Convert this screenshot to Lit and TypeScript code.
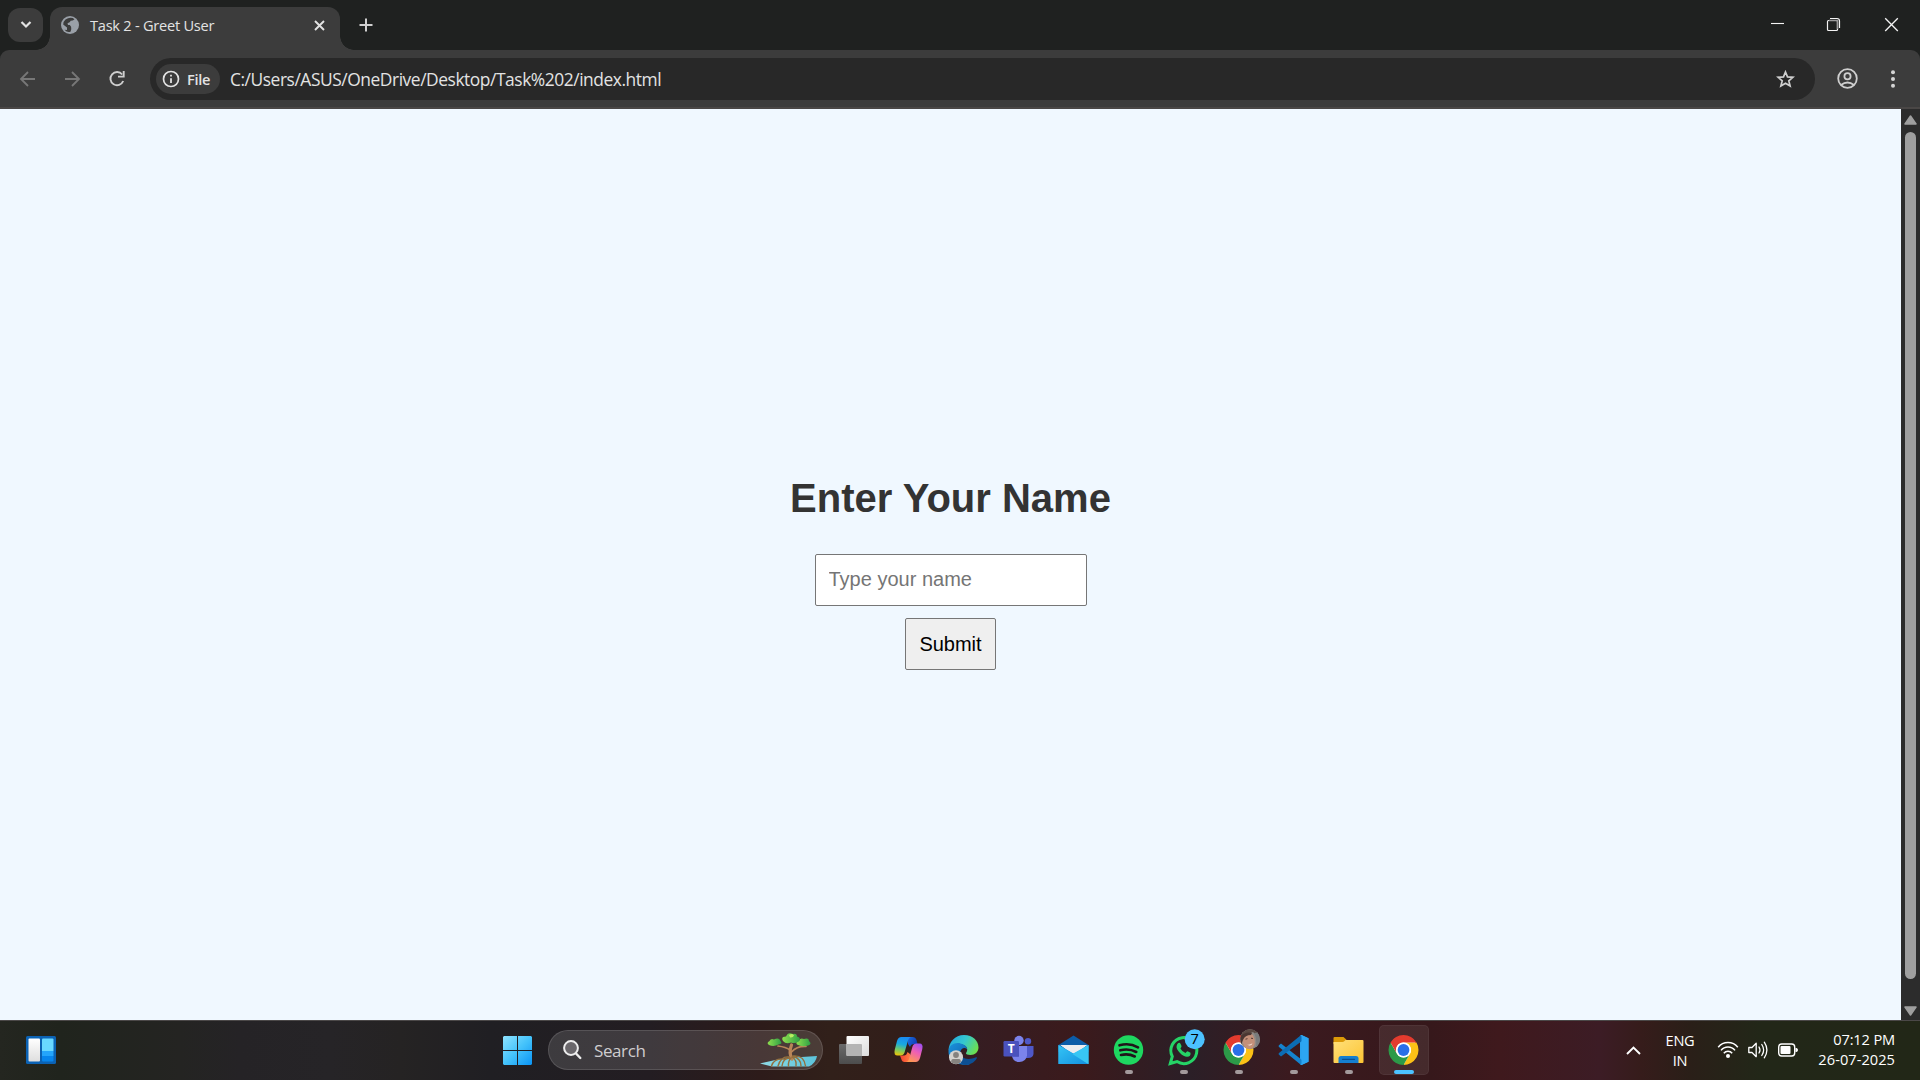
import { LitElement, html, svg, css } from "lit";
import { customElement } from "lit/decorators.js";

const chromeSector = "M0-7.5H12.99A15 15 0 0 0-12.99-7.5L-6.5 3.75A7.5 7.5 0 0 1 0-7.5Z";
const chromeMark = svg`
  <g transform="translate(27.5 30)">
    <circle r="14" fill="#fff" />
    <path d=${chromeSector} fill="#fbc116" transform="rotate(120)" />
    <path d=${chromeSector} fill="#2c9a48" transform="rotate(240)" />
    <path d=${chromeSector} fill="#e33b2e" />
    <circle r="7.5" fill="#fff" />
    <circle r="5.9" fill="#2a6fe8" />
  </g>`;

const icons = {
  windows: svg`
    <defs><linearGradient id="win" gradientUnits="userSpaceOnUse" x1="13" y1="16" x2="42" y2="45">
      <stop offset="0" stop-color="#8fe3ff" /><stop offset=".5" stop-color="#45c3fb" /><stop offset="1" stop-color="#0a94f5" />
    </linearGradient></defs>
    <path fill="url(#win)" d="M14 16H27V30H13V17ZM28 16H41L42 17V30H28ZM13 31H27V45H14L13 44ZM28 31H42V44L41 45H28Z" />`,
  taskView: svg`
    <defs>
      <linearGradient id="tv1" x2="1" y2="1"><stop offset="0" stop-color="#fff" /><stop offset="1" stop-color="#dcdcdc" /></linearGradient>
      <linearGradient id="tv2" x2="0" y2="1"><stop offset="0" stop-color="#6b6b6b" /><stop offset="1" stop-color="#4c4c4c" /></linearGradient>
    </defs>
    <rect x="13" y="24" width="23" height="20" rx="1" fill="url(#tv2)" />
    <rect x="20.500" y="16" width="22.500" height="20" rx="1" fill="url(#tv1)" />
    <path d="M20.500 24H35Q36 24 36 25V36H21.500Q20.500 36 20.500 35Z" fill="#b4b4b4" />`,
  copilot: svg`
    <defs>
      <linearGradient id="cp1" x1=".3" y1="0" x2=".1" y2="1"><stop offset="0" stop-color="#1a8cf0" /><stop offset=".35" stop-color="#18a9e0" /><stop offset=".65" stop-color="#6fc96a" /><stop offset="1" stop-color="#f5c400" /></linearGradient>
      <linearGradient id="cp2" x1=".8" y1="0" x2=".3" y2="1"><stop offset="0" stop-color="#a04ff0" /><stop offset=".45" stop-color="#ee5fb4" /><stop offset="1" stop-color="#ff9a4e" /></linearGradient>
      <linearGradient id="cp3" x2="1" y2=".4"><stop offset="0" stop-color="#1d6fe0" /><stop offset="1" stop-color="#0d3eb8" /></linearGradient>
      <linearGradient id="cp4" x2="1" y2="0"><stop offset="0" stop-color="#f4402e" /><stop offset="1" stop-color="#ff7d44" /></linearGradient>
    </defs>
    <path d="M26 17H31.500Q34.500 17 35.500 20L36.500 24H33Q30 24 29 27L27 24Z" fill="url(#cp3)" />
    <path d="M29 42H23.500Q21 42 20.300 39L19 35.500H23Q25.500 35.500 26.500 32L29 34Z" fill="url(#cp4)" />
    <path d="M20.500 17H30.500Q28 17 27 20.500L23.500 32.500Q22.500 35.500 19.500 35.500H16.500Q12.500 35.500 13.700 30L16 21Q17.200 17 20.500 17Z" fill="url(#cp1)" />
    <path d="M34.700 42H24.500Q27.200 42 28.200 38.500L31.500 26.500Q32.500 23.500 35.500 23.500H38.500Q42.500 23.500 41.300 29L39 38Q37.800 42 34.700 42Z" fill="url(#cp2)" />`,
  edge: svg`
    <defs>
      <linearGradient id="ed1" x1="0" y1=".2" x2="1" y2=".6"><stop offset="0" stop-color="#22a8e0" /><stop offset=".5" stop-color="#35c8cf" /><stop offset="1" stop-color="#6de04e" /></linearGradient>
      <linearGradient id="ed2" x2="1" y2="1"><stop offset="0" stop-color="#1b93dd" /><stop offset="1" stop-color="#0c59a4" /></linearGradient>
    </defs>
    <path d="M12.500 31C12.500 22 19 15 28 15C37 15 42.500 21 42.500 27.500C42.500 32 39 35 34.500 35C31.500 35 30 34.300 30 33.300C30 32.500 31.200 31.800 31.200 29.500C31.200 26.500 28 24.500 24 24C18 23 13.500 27 12.500 31Z" fill="url(#ed1)" />
    <path d="M12.500 31C13 25 19 22 24.500 23.500C29 24.500 31.200 27 31.200 29.500C29.500 27 25 27.500 24.300 32C23.800 37 28 41.500 34 45C32 45.300 12 46 12.500 31Z" fill="url(#ed2)" />
    <path d="M24.300 32C24 38 31 41 40 37.300Q41.500 37 40.700 38.500C38 43 33.500 45.200 28 45C22 43 22 34 24.300 32Z" fill="#0d4f93" />
    <circle cx="20" cy="37.300" r="7" fill="#d4d2cf" />
    <circle cx="20" cy="35" r="2.900" fill="#85827f" />
    <path d="M15.200 42.200Q15 39 17 39H23Q25 39 24.800 42.200Q20 46 15.200 42.200Z" fill="#85827f" />`,
  teams: svg`
    <circle cx="37" cy="21.300" r="3.200" fill="#4f58c8" />
    <path d="M32 26H42.500V34Q42 38 37 38H32Z" fill="#4f58c8" />
    <circle cx="28" cy="20.500" r="4.700" fill="#7b83eb" />
    <path d="M21 26H36V35.500Q35 42 28.300 42T21 35.500Z" fill="#7b83eb" />
    <path d="M21 26H28V37H21.400Z" fill="#5a62cf" />
    <rect x="12.500" y="21" width="15.500" height="15.500" rx="1.200" fill="#4a52bd" />
    <text class="teams-t" x="20.200" y="33.200" text-anchor="middle">T</text>`,
  mail: svg`
    <defs><linearGradient id="ml" x2="1" y2="1"><stop offset="0" stop-color="#35c5f5" /><stop offset="1" stop-color="#1490df" /></linearGradient></defs>
    <path d="M12.500 25L27.500 15.500L42.500 25V32H12.500Z" fill="#0c5ca8" />
    <path d="M14.500 25H41L28 36Z" fill="#f3f1f1" />
    <path d="M12.500 25L28 33.500L42.500 25V43.500Q42.500 44 42 44H13Q12.500 44 12.500 43.500Z" fill="#27a9ea" />
    <path d="M14.500 25H41L29.500 32.500Q28 33.800 26 32.500Z" fill="#ececef" />
    <path d="M42.500 25L24.500 35L42 44H42.500Z" fill="#38c6f4" />
    <path d="M12.500 25L42 44H13Q12.500 44 12.500 43.500Z" fill="url(#ml)" />`,
  spotify: svg`
    <circle cx="27.500" cy="30" r="14.700" fill="#1ed760" />
    <path d="M18.500 25.300Q28.500 22.500 37 27.300M19.300 30.300Q27.800 28 35.300 32M20 35Q27.500 33.200 33.800 36.500" fill="none" stroke="#20141a" stroke-width="2.600" stroke-linecap="round" />`,
  whatsapp: svg`
    <path d="M14.300 43.500L16.300 36.500A13 13 0 1 1 21 41.600Z" fill="none" stroke="#25d366" stroke-width="3" stroke-linejoin="miter" />
    <path d="M22.300 23Q23.700 22 24.500 23.700L25.500 26Q25.800 27 24.400 28.400Q26 31.500 29.500 33Q31 31 31.600 31.200L34.500 32.700Q35 36.500 31.300 36.700Q28 37 24 33Q20 29 20.600 26Q20.900 24 22.300 23Z" fill="#25d366" />
    <circle cx="38.700" cy="19.200" r="10" fill="#4cc2ff" />
    <text class="badge-n" x="38.700" y="24.300" text-anchor="middle">7</text>`,
  chrome: chromeMark,
  chromeProfile: svg`
    ${chromeMark}
    <defs><clipPath id="av"><circle cx="39" cy="19.200" r="10" /></clipPath></defs>
    <g clip-path="url(#av)">
      <rect x="28" y="9" width="22" height="21" fill="#8f8a85" />
      <path d="M28 9H50V20L42 12L30 17Z" fill="#5b4a43" />
      <path d="M43 13Q47 20 44 30H50V12Z" fill="#797b7c" />
      <path d="M31 16Q37 11 42 15Q45 21 43 26Q40 31 35 28Q30 23 31 16Z" fill="#c49079" />
      <path d="M29 17Q34 11 41 13L40 15Q34 15 32 20L30 25Z" fill="#4a3732" />
      <path d="M34.500 19.200L36.500 18.700M40 18.200L42 18.500" stroke="#573c34" stroke-width="1" />
      <path d="M36 24.500Q39.500 25.500 41.500 23Q40.500 27 36 24.500Z" fill="#fff0e8" />
    </g>`,
  vscode: svg`
    <path d="M35.500 15L42.500 18.200V41.800L35.500 45L34 43V17Z" fill="#2aa3ee" />
    <path d="M12.700 25.500L15 23.500L36 40V44.800Q35 45 34.500 44.500L12.700 26.800Z" fill="#1483cf" />
    <path d="M12.700 34.500L15 36.500L36 21V15.200Q35 15 34.500 15.500L12.700 33.200Z" fill="#0c6cb4" />
    <path d="M35.500 15Q34.500 15 34 15.900Q35.500 15.500 35.500 17V43Q35.500 44.500 34 44.100Q34.500 45 35.500 45L42.500 41.800V18.200Z" fill="#2ca6f2" />`,
  explorer: svg`
    <defs><linearGradient id="fx" x2="1" y2="1"><stop offset="0" stop-color="#ffe07a" /><stop offset="1" stop-color="#fcc433" /></linearGradient></defs>
    <path d="M12.500 18Q12.500 17 13.500 17H22.500L25.500 19.800L22 24H12.500Z" fill="#dc9a08" />
    <path d="M12.500 22H21.500Q22.500 22 23.500 21L24.500 20H41.500Q42.500 20 42.500 21V42Q42.500 43 41.500 43H13.500Q12.500 43 12.500 42Z" fill="url(#fx)" />
    <path d="M17.500 43V38.500Q17.500 36 20 36H35Q37.500 36 37.500 38.500V43Z" fill="#157fd0" />
    <path d="M21.500 39.300H33.500" stroke="#0a4f92" stroke-width="1.300" stroke-linecap="round" />`,
};

const apps: { icon: unknown; state: string; name: string }[] = [
  { icon: icons.taskView, state: "", name: "task-view" },
  { icon: icons.copilot, state: "", name: "copilot" },
  { icon: icons.edge, state: "", name: "edge" },
  { icon: icons.teams, state: "", name: "teams" },
  { icon: icons.mail, state: "", name: "mail" },
  { icon: icons.spotify, state: "running", name: "spotify" },
  { icon: icons.whatsapp, state: "running", name: "whatsapp" },
  { icon: icons.chromeProfile, state: "running", name: "chrome-profile" },
  { icon: icons.vscode, state: "running", name: "vscode" },
  { icon: icons.explorer, state: "running", name: "explorer" },
  { icon: icons.chrome, state: "active", name: "chrome" },
];

@customElement("browser-chrome")
class BrowserChrome extends LitElement {
  static styles = css`
    :host { display: block; height: 109px; background: #1f2120; font-family: "Open Sans", "Noto Sans", sans-serif; color: #e3e3e3; }
    svg { display: block; }
    .strip { display: flex; height: 50px; align-items: flex-start; }
    .tab-search { width: 35px; height: 34px; margin: 8px 7px 0 8px; border-radius: 12px; background: #3c3c3c; display: grid; place-items: center; }
    .tab { position: relative; width: 290px; height: 43px; margin-top: 7px; border-radius: 12px 12px 0 0; background: #3c3c3c; display: flex; align-items: center; box-sizing: border-box; padding: 0 15px 7px 11px; }
    .tab::before, .tab::after { content: ""; position: absolute; bottom: 0; width: 14px; height: 14px; }
    .tab::before { left: -14px; background: radial-gradient(circle at 0 0, transparent 13.5px, #3c3c3c 14px); }
    .tab::after { right: -14px; background: radial-gradient(circle at 100% 0, transparent 13.5px, #3c3c3c 14px); }
    .title { font-size: 14.6px; letter-spacing: -0.25px; margin-left: 11px; flex: 1; line-height: 20px; white-space: nowrap; }
    .plus { margin: 18px 0 0 19px; }
    .caption { margin-left: auto; display: flex; }
    .bar { display: flex; align-items: center; height: 59px; box-sizing: border-box; background: #3c3c3c; border-radius: 9px 9px 0 0; border-bottom: 2px solid #4a4746; padding: 0 17px 0 18px; }
    .omni { display: flex; align-items: center; width: 1665px; height: 42px; border-radius: 21px; background: #282828; margin-left: 23px; box-sizing: border-box; padding: 0 20px 0 6px; }
    .chip { display: flex; align-items: center; width: 64px; height: 30px; border-radius: 15px; background: #3c3c3c; box-sizing: border-box; padding-left: 6px; font-size: 14.6px; font-weight: 600; letter-spacing: -0.3px; gap: 7px; line-height: 20px; }
    .url { margin-left: 10px; flex: 1; font-size: 17.4px; letter-spacing: -0.45px; line-height: 24px; white-space: nowrap; padding-top: 1px; }
    .nav { display: flex; gap: 25px; }
    .nav svg:last-child { margin-left: -1px; }
    .profile { margin-left: 22px; }
    .menu { margin-left: 30px; }
  `;
  render() {
    return html`
      <div class="strip">
        <div class="tab-search">
          <svg width="14" height="10" viewBox="0 0 14 10"><path d="M2.500 2L7 6.500L11.500 2" fill="none" stroke="#e3e3e3" stroke-width="2.200" /></svg>
        </div>
        <div class="tab">
          <svg width="18" height="18" viewBox="0 0 18 18">
            <circle cx="9" cy="9" r="9" fill="#9aa0a8" />
            <path d="M7 2.200Q11 1 13.500 3.200Q12 5 10 4.600Q9 7 6.500 7.200L7 9H10.500Q11.500 10.500 13 11.300L10.500 12.500L9.500 15.800Q6 16.800 3.500 13.800L6 14V11.500L2.200 8.500Q2.300 5.500 4.500 3.600Z" fill="#3c3c3c" />
            <path d="M8.500 8.500H11.500Q12 10.800 14 11.300Q12 13.500 10 12.500Q10.500 10.500 8.500 8.500Z" fill="#9aa0a8" />
          </svg>
          <span class="title">Task 2 - Greet User</span>
          <svg width="11" height="11" viewBox="0 0 11 11"><path d="M1 1L10 10M10 1L1 10" stroke="#e3e3e3" stroke-width="1.900" /></svg>
        </div>
        <svg class="plus" width="14" height="14" viewBox="0 0 14 14"><path d="M7 .5V13.500M.5 7H13.500" stroke="#d0d0d0" stroke-width="2" /></svg>
        <svg class="caption" width="200" height="50" viewBox="0 0 200 50" fill="none" stroke="#f4f4f4">
          <path d="M51 23.500H64" stroke-width="1.100" />
          <path d="M110 18.500H117Q119.500 18.500 119.500 21V28" stroke-width="1.200" />
          <rect x="107.500" y="20.500" width="10" height="10" rx="1" stroke-width="1.200" />
          <path d="M109 20.500H117.500V29" stroke="#9a9a9a" stroke-width="1.500" />
          <path d="M165.200 18.300L177.800 31M177.800 18.300L165.200 31" stroke-width="1.300" />
        </svg>
      </div>
      <div class="bar">
        <div class="nav">
          <svg width="20" height="20" viewBox="0 0 20 20" fill="none" stroke="#777" stroke-width="1.800"><path d="M17 10H3.500M10 3L3 10L10 17" /></svg>
          <svg width="20" height="20" viewBox="0 0 20 20" fill="none" stroke="#777" stroke-width="1.800"><path d="M2 10H15.500M9 3L16 10L9 17" /></svg>
          <svg width="20" height="20" viewBox="0 0 20 20" fill="none" stroke="#cfcfcf" stroke-width="1.900"><path d="M15.200 5.500A6.600 6.600 0 1 0 16.200 12" /><path d="M16.700 2V7.600H11" /></svg>
        </div>
        <div class="omni">
          <div class="chip">
            <svg width="18" height="18" viewBox="0 0 18 18" fill="none" stroke="#e3e3e3"><circle cx="9" cy="9" r="7.500" stroke-width="1.700" /><path d="M9 8.200V13M9 4.800V6.600" stroke-width="1.800" /></svg>
            <span>File</span>
          </div>
          <span class="url">C:/Users/ASUS/OneDrive/Desktop/Task%202/index.html</span>
          <svg width="19" height="18" viewBox="0 0 19 18"><path d="M9.500 2L11.500 6.900L16.900 7.300L12.800 10.800L14.100 16L9.500 13.200L4.900 16L6.200 10.800L2.100 7.300L7.500 6.900Z" fill="none" stroke="#cfcfcf" stroke-width="1.700" /></svg>
        </div>
        <svg class="profile" width="21" height="21" viewBox="0 0 21 21" fill="none" stroke="#cfcfcf" stroke-width="1.800"><circle cx="10.500" cy="10.500" r="9.300" /><circle cx="10.500" cy="8.300" r="3.100" /><path d="M4 17Q10.500 12 17 17" /></svg>
        <svg class="menu" width="8" height="20" viewBox="0 0 8 20" fill="#d5d5d5"><circle cx="5" cy="3.200" r="2" /><circle cx="5" cy="10" r="2" /><circle cx="5" cy="16.800" r="2" /></svg>
      </div>
    `;
  }
}

@customElement("greet-page")
class GreetPage extends LitElement {
  static styles = css`
    :host { display: flex; height: 911px; background: #f0f8ff; font-family: Arial, "Liberation Sans", sans-serif; }
    .content { flex: 1; display: flex; flex-direction: column; align-items: center; padding-top: 366px; }
    h1 { margin: 0 0 33px; font-size: 40px; line-height: 46px; font-weight: 700; color: #333; white-space: nowrap; }
    input, button { font: 20px/23px Arial, "Liberation Sans", sans-serif; box-sizing: border-box; height: 52px; border: 1px solid #767676; border-radius: 2px; margin: 0; }
    input { width: 272px; padding: 0 13px 2px; background: #fff; }
    input::placeholder { color: #757575; }
    button { width: 91px; padding: 0; margin-top: 12px; background: #efefef; color: #000; }
    .scroll { width: 19px; background: #2c2c2c; display: flex; flex-direction: column; align-items: center; box-sizing: border-box; padding: 6px 0 4px; }
    .thumb { width: 11px; height: 847px; margin: 7px 0 27px; border-radius: 5.5px; background: #9f9f9f; }
    svg { display: block; flex: none; }
  `;
  render() {
    return html`
      <div class="content">
        <h1>Enter Your Name</h1>
        <input type="text" placeholder="Type your name" />
        <button>Submit</button>
      </div>
      <div class="scroll">
        <svg width="13" height="10" viewBox="0 0 13 10"><path d="M6.500 1L12 9H1Z" fill="#9f9f9f" stroke="#9f9f9f" stroke-width="1.500" stroke-linejoin="round" /></svg>
        <div class="thumb"></div>
        <svg width="13" height="10" viewBox="0 0 13 10"><path d="M6.500 9L12 1H1Z" fill="#9f9f9f" stroke="#9f9f9f" stroke-width="1.500" stroke-linejoin="round" /></svg>
      </div>
    `;
  }
}

@customElement("task-bar")
class TaskBar extends LitElement {
  static styles = css`
    :host {
      display: flex; height: 60px; box-sizing: border-box; color: #fff; font-family: "Open Sans", "Noto Sans", sans-serif;
      box-shadow: inset 0 1px #4b4848;
      background: linear-gradient(90deg, #242620 0, #20241d 60px, #242422 180px, #252326 240px, #262427 330px, #252323 400px, #201f23 490px, #231d22 650px, #2d1b1a 760px, #31201a 830px, #321e1a 900px, #351d22 970px, #3b1a1c 1080px, #2b1f27 1190px, #3b1a1f 1290px, #36181b 1430px, #3f191d 1500px, #3c1c25 1600px, #361c1b 1640px, #2a1f18 1690px, #222718 1760px, #222717 1920px);
    }
    svg { display: block; }
    .widgets { width: 490px; box-sizing: border-box; padding: 16px 0 0 26px; }
    .slot { position: relative; width: 55px; height: 60px; }
    .slot.active::before { content: ""; position: absolute; left: 3px; top: 5px; width: 50px; height: 50px; box-sizing: border-box; border-radius: 5px; background: rgba(255, 255, 255, 0.08); border: 1px solid rgba(255, 255, 255, 0.05); }
    .slot svg { position: relative; }
    .slot.running::after, .slot.active::after { content: ""; position: absolute; bottom: 6px; left: 24px; height: 4px; width: 8px; border-radius: 2px; background: #a39a9c; }
    .slot.active::after { left: 18px; width: 20px; background: #4cc2ff; }
    .search { display: flex; align-items: center; width: 275px; height: 40px; margin: 10px 3px 0 3px; box-sizing: border-box; border-radius: 20px; background: rgba(255, 255, 255, 0.13); border: 1px solid rgba(255, 255, 255, 0.13); padding: 0 4px 0 14px; }
    .search span { flex: 1; margin-left: 12px; font-size: 17px; letter-spacing: -0.4px; color: #cfcdcf; line-height: 24px; padding-top: 2px; }
    .tray { display: flex; margin-left: auto; align-items: center; padding-right: 25px; font-size: 14.6px; line-height: 20px; letter-spacing: -0.3px; }
    .lang { width: 50px; text-align: center; margin-left: 14px; padding-bottom: 1px; }
    .status { margin-left: 12px; }
    .clock { width: 96px; text-align: right; padding-bottom: 2px; letter-spacing: -0.15px; white-space: nowrap; }
    .date { letter-spacing: 0.05px; }
    .teams-t { font: 700 12px "Open Sans", sans-serif; fill: #fff; }
    .badge-n { font: 14.6px "Open Sans", sans-serif; fill: #000; }
  `;
  render() {
    return html`
      <div class="widgets">
        <svg width="30" height="28" viewBox="0 0 30 28">
          <defs><linearGradient id="wd" x2="0" y2="1"><stop offset="0" stop-color="#fff" /><stop offset="1" stop-color="#dedede" /></linearGradient></defs>
          <rect width="30" height="28" rx="1.500" fill="#0b62b4" />
          <rect x="2.500" y="2.500" width="11.500" height="23" rx="1" fill="url(#wd)" />
          <path d="M16 3.500Q16 2.500 17 2.500H26.500Q27.500 2.500 27.500 3.500V15H16Z" fill="#69d8ff" />
          <rect x="16" y="15" width="11.500" height="5" fill="#24a5fb" />
          <path d="M16 20H27.500V24.500Q27.500 25.500 26.500 25.500H17Q16 25.500 16 24.500Z" fill="#0785ec" />
        </svg>
      </div>
      <div class="slot"><svg width="55" height="60">${icons.windows}</svg></div>
      <div class="search">
        <svg width="19" height="20" viewBox="0 0 19 20"><circle cx="8" cy="8" r="6.900" fill="#6a676b" stroke="#eee" stroke-width="2" /><path d="M13 13.500L17.300 18" stroke="#eee" stroke-width="2.400" stroke-linecap="round" /></svg>
        <span>Search</span>
        <svg width="58" height="34" viewBox="0 0 58 34">
          <defs>
            <linearGradient id="wt" x2="1" y2="0"><stop offset="0" stop-color="#8fdbe6" /><stop offset="1" stop-color="#5cc3da" /></linearGradient>
            <linearGradient id="lf" x2="1" y2="0"><stop offset="0" stop-color="#8ddf4e" /><stop offset="1" stop-color="#2fa045" /></linearGradient>
          </defs>
          <path d="M0 30.500Q18 26 34 24.500L57 23Q56 30 49 33.500H12Q6 32 0 30.500Z" fill="url(#wt)" />
          <g fill="none" stroke="#b98558" stroke-linecap="round">
            <path d="M32 26Q28.500 20 31.500 12" stroke-width="3.200" />
            <path d="M30 17Q26 14 18 13M31.500 19Q37 13 46 13.500" stroke-width="1.700" />
            <path d="M29 24Q21 23 18 33M30 25Q23 25 22 33M31 25Q28 28 28.500 33M32 24Q37 27 36 33M32.500 23.500Q41 25 41 33M33 23Q44 22 45.500 33M24 26Q14 25 11.500 33" stroke="#94703e" stroke-width="1.400" />
          </g>
          <path d="M9 12Q6 10 9.500 8Q11 5 14 6.500Q19 4 20.500 8Q23 11 18.500 11.500Q14 14 9 12Z" fill="url(#lf)" />
          <path d="M37 11.500Q35 8.500 39 8Q40 4.500 44 6Q49 4.500 49 8Q52.500 11 48 12.500Q42 14.500 37 11.500Z" fill="url(#lf)" />
          <path d="M23 8Q20.500 3.500 26 3.500Q28-1.500 33 1Q37 0 37 3.500Q42 5 38.500 8.500Q35 11 31 9.500Q26 11.500 23 8Z" fill="url(#lf)" />
          <path d="M29 2Q32 0 34 2.500Q33 5 30 4.500Z" fill="#b8ee62" />
        </svg>
      </div>
      ${apps.map((a) => html`<div class="slot ${a.state} ${a.name}"><svg width="55" height="60">${a.icon}</svg></div>`)}
      <div class="tray">
        <svg width="15" height="9" viewBox="0 0 15 9"><path d="M1 8L7.500 1.500L14 8" fill="none" stroke="#fff" stroke-width="1.900" /></svg>
        <div class="lang">ENG<br />IN</div>
        <svg class="status" width="82" height="20" viewBox="0 0 82 20" fill="none" stroke="#fff">
          <path d="M1.200 7.200A12.500 12.500 0 0 1 20.800 7.200M4 10.400A9 9 0 0 1 18 10.400M6.800 13.300A5.400 5.400 0 0 1 15.200 13.300" stroke-width="1.500" />
          <circle cx="11" cy="16" r="2" fill="#fff" stroke="none" />
          <path d="M31.800 7.500H35L39.200 3.300V16.700L35 12.500H31.800Z" stroke-width="1.300" stroke-linejoin="round" />
          <path d="M42 7Q44 10 42 13M44.800 4.500Q48.500 10 44.800 15.500M47.300 2.200Q52.500 10 47.300 17.800" stroke-width="1.300" stroke-linecap="round" />
          <rect x="61.700" y="4" width="16" height="12" rx="3" stroke-width="1.400" />
          <rect x="63.500" y="6" width="10" height="8" rx="1" fill="#fff" stroke="none" />
          <path d="M78.500 8H79.500Q81 8.300 81 10T79.500 12H78.500Z" fill="#fff" stroke="none" />
        </svg>
        <div class="clock">07:12 PM<br /><span class="date">26-07-2025</span></div>
      </div>
    `;
  }
}

@customElement("app-root")
class AppRoot extends LitElement {
  static styles = css`
    :host { display: block; width: 1920px; height: 1080px; overflow: hidden; }
  `;
  render() {
    return html`<browser-chrome></browser-chrome><greet-page></greet-page><task-bar></task-bar>`;
  }
}
